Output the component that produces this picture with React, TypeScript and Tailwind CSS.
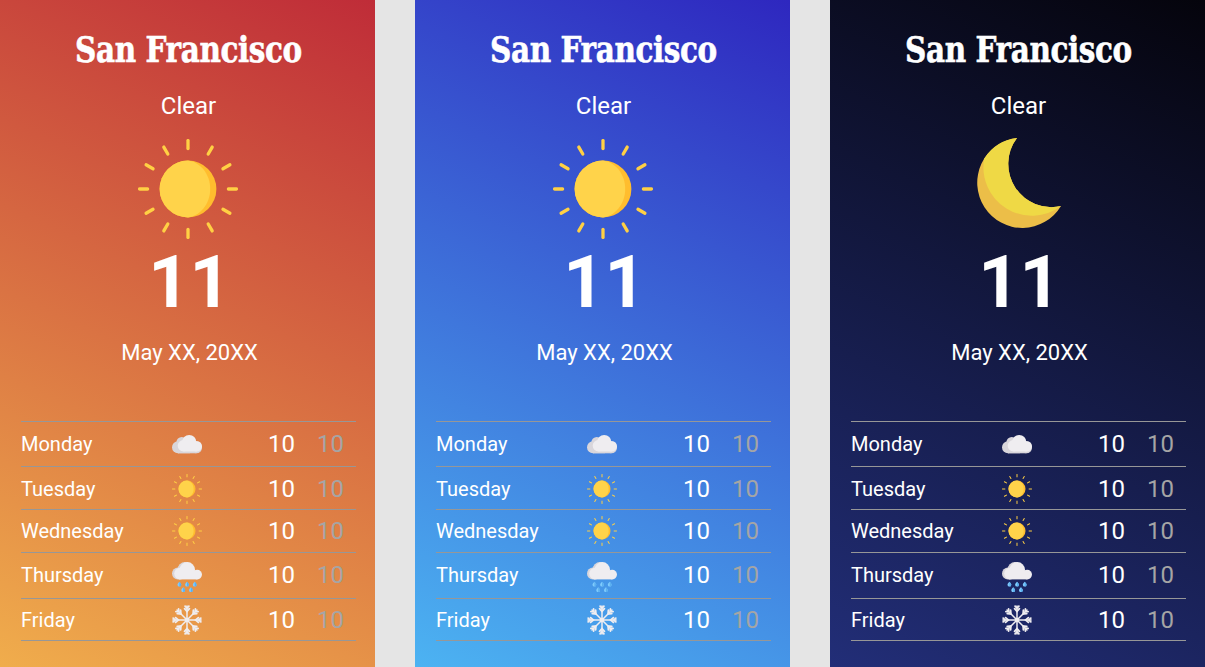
type Weather = 'cloud' | 'sun' | 'rain' | 'snow';

const rayAngles = [0, 30, 60, 90, 120, 150, 180, 210, 240, 270, 300, 330];
const armAngles = [0, 45, 90, 135, 180, 225, 270, 315];

function Sun({ className }: { className: string }) {
  return (
    <svg viewBox="0 0 100 100" className={className}>
      {rayAngles.map((a) => (
        <path key={a} d="M50 1.6V9.6" stroke="#FFD044" strokeWidth="3.3" strokeLinecap="round" transform={`rotate(${a} 50 50)`} />
      ))}
      <circle cx="50" cy="50" r="28.4" fill="#FFBD2E" />
      <path d="M50 21.6A28.4 28.4 0 0 0 50 78.4C62 77 72.2 65 72.2 50S62 23 50 21.6Z" fill="#FFD34A" />
    </svg>
  );
}

function Moon() {
  return (
    <svg viewBox="0 0 84 90" className="mr-[-1px] h-[90px] w-[84px]">
      <path d="M40 0A45.1 45.1 0 1 0 84 68A43.1 43.1 0 0 1 40 0Z" fill="#ECBE48" />
      <path d="M40 0A45.1 45.1 0 0 0 7.2 20.5A48.5 48.5 0 0 0 84 68A43.1 43.1 0 0 1 40 0Z" fill="#EFD945" />
    </svg>
  );
}

function Cloud() {
  return (
    <svg viewBox="0 0 30 30" className="h-[30px] w-[30px]">
      <g fill="#D9D6DB">
        <circle cx="6" cy="18.2" r="6" />
        <circle cx="9.8" cy="13.3" r="5.4" />
        <rect x="6" y="15" width="12" height="9.2" />
        <circle cx="24.4" cy="18.7" r="5.6" />
        <rect x="6" y="20" width="18.4" height="4.3" />
      </g>
      <g fill="#EFEDF0">
        <circle cx="17.2" cy="13.2" r="7.2" />
        <circle cx="11.4" cy="16.8" r="5.7" />
        <circle cx="24.8" cy="17.3" r="5.2" />
        <rect x="11.4" y="13" width="13.4" height="9.5" />
      </g>
    </svg>
  );
}

function Rain() {
  const drops = [[7.4, 19.7], [15, 19.7], [22.7, 19.7], [11.2, 25.3], [18.9, 25.3]];
  return (
    <svg viewBox="0 0 30 30" className="h-[30px] w-[30px]">
      <g fill="#D9D6DB">
        <circle cx="6" cy="11.4" r="6" />
        <circle cx="13" cy="7.5" r="7.4" />
      </g>
      <g fill="#EFEDF0">
        <circle cx="15.3" cy="7.9" r="7.8" />
        <circle cx="8" cy="11.6" r="5.8" />
        <circle cx="25.2" cy="12.6" r="4.8" />
        <rect x="7" y="10" width="18.2" height="7.4" />
      </g>
      {drops.map(([x, y]) => (
        <g key={x} transform={`translate(${x} ${y})`}>
          <path d="M0 0C.9 1.1 1.9 2 1.9 3A1.9 1.9 0 0 1-1.9 3C-1.9 2-.9 1.1 0 0Z" fill="#7FCBFC" />
          <path d="M0 0C.9 1.1 1.9 2 1.9 3A1.9 1.9 0 0 1 0 4.9Z" fill="#5AAFF0" />
        </g>
      ))}
    </svg>
  );
}

function Snow() {
  return (
    <svg viewBox="0 0 30 30" className="h-[30px] w-[30px]" fill="none" stroke="#EFEDF0" strokeLinecap="round">
      {armAngles.map((a) => (
        <g key={a} transform={`rotate(${a} 15 15)`}>
          <path d="M15 15V.9" strokeWidth="1.5" />
          <path d="M13.1 1.2L15 3.2L16.9 1.2M12.6 3.6L15 6.4L17.4 3.6" strokeWidth="1.8" />
        </g>
      ))}
      <circle cx="15" cy="15" r="2.3" fill="#EFEDF0" stroke="none" />
    </svg>
  );
}

function Icon({ kind }: { kind: Weather }) {
  if (kind === 'cloud') return <Cloud />;
  if (kind === 'rain') return <Rain />;
  if (kind === 'snow') return <Snow />;
  return <Sun className="h-[30px] w-[30px]" />;
}

const days: { name: string; kind: Weather; row: string; text: string }[] = [
  { name: 'Monday', kind: 'cloud', row: 'h-[45px]', text: '' },
  { name: 'Tuesday', kind: 'sun', row: 'h-[43px] pt-[2px]', text: '' },
  { name: 'Wednesday', kind: 'sun', row: 'h-[43px]', text: '' },
  { name: 'Thursday', kind: 'rain', row: 'h-[46px] pt-[2px]', text: 'pb-[4px]' },
  { name: 'Friday', kind: 'snow', row: 'h-[42px] pt-[1px]', text: '' },
];

function Card({ background, night = false }: { background: string; night?: boolean }) {
  return (
    <section className={`flex h-[667px] w-[375px] shrink-0 flex-col text-white ${background}`}>
      <h1 className="mt-[26px] flex h-12 justify-center pl-[2px] font-['DejaVu_Serif',serif] text-[35px] leading-[48px] font-bold whitespace-nowrap">
        <span className="scale-x-[0.843] tracking-[-0.5px] [-webkit-text-stroke:0.6px_white]">San Francisco</span>
      </h1>
      <p className="mt-[16px] h-8 pl-[2px] text-center text-2xl leading-8">Clear</p>
      <div className="mt-[16px] flex h-[102px] justify-center pl-[1px]">
        {night ? <Moon /> : <Sun className="mt-[1px] h-[100px] w-[100px]" />}
      </div>
      <div className="mt-[1px] h-[84px] pl-[4px] text-center text-[72px] leading-[84px] font-bold">11</div>
      <p className="mt-[12px] h-8 pl-[4px] text-center text-[22px] leading-8">May XX, 20XX</p>
      <div className="mt-[52px] ml-[21px] w-[335px] border-t border-[#979797]">
        {days.map((d) => (
          <div key={d.name} className={`flex items-center border-b border-[#979797] ${d.row}`}>
            <span className={`w-[151px] text-xl ${d.text}`}>{d.name}</span>
            <Icon kind={d.kind} />
            <span className={`ml-[66px] w-[49px] text-2xl ${d.text}`}>10</span>
            <span className={`text-2xl text-[#a5a5a5] ${d.text}`}>10</span>
          </div>
        ))}
      </div>
    </section>
  );
}

export default function App() {
  return (
    <main className="flex h-[667px] w-[1205px] gap-10 overflow-hidden bg-[#e5e5e5] font-['Roboto',sans-serif]">
      <Card background="bg-[linear-gradient(205deg,#bf2c38_0%,#f0ad4c_100%)]" />
      <Card background="bg-[linear-gradient(205deg,#2e27bf_0%,#4cb3f2_100%)]" />
      <Card night background="bg-[linear-gradient(205deg,#05040c_0%,#222e78_100%)]" />
    </main>
  );
}
